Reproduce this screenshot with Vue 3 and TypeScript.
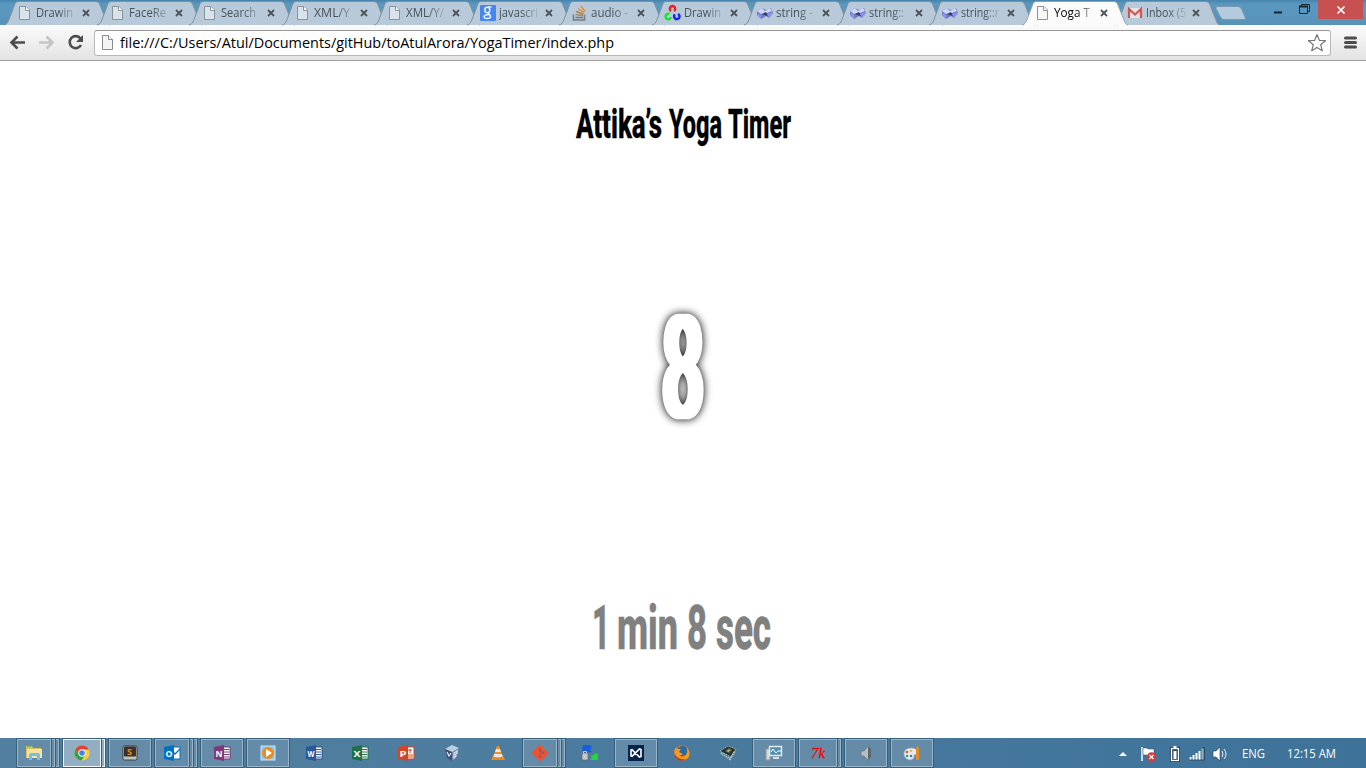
<script setup lang="ts">
interface Tab { title: string; icon: string; active?: boolean; w: number }
interface Task { icon: string; open?: boolean; stack?: number; focus?: boolean }

const tabs: Tab[] = [
  { title: 'Drawin', icon: 'page', w: 37 },
  { title: 'FaceRe', icon: 'page', w: 37 },
  { title: 'Search', icon: 'page', w: 35 },
  { title: 'XML/Y', icon: 'page', w: 36 },
  { title: 'XML/Y/', icon: 'page', w: 38 },
  { title: 'javascri', icon: 'google', w: 39 },
  { title: 'audio -', icon: 'stack', w: 37 },
  { title: 'Drawin', icon: 'opencv', w: 37 },
  { title: 'string -', icon: 'cpp', w: 37 },
  { title: 'string::', icon: 'cpp', w: 35 },
  { title: 'string::r', icon: 'cpp', w: 38 },
  { title: 'Yoga T', icon: 'page', active: true, w: 36 },
  { title: 'Inbox (5', icon: 'gmail', w: 40 },
]

const tasks: Task[] = [
  { icon: 'explorer', open: true, stack: 2 },
  { icon: 'chrome', open: true, stack: 1, focus: true },
  { icon: 'sublime', open: true },
  { icon: 'outlook', open: true, stack: 2 },
  { icon: 'onenote', open: true },
  { icon: 'wmp', open: true },
  { icon: 'word' },
  { icon: 'excel' },
  { icon: 'ppt' },
  { icon: 'vbox' },
  { icon: 'vlc' },
  { icon: 'git', open: true, stack: 2 },
  { icon: 'sync' },
  { icon: 'vs', open: true },
  { icon: 'firefox' },
  { icon: 'chip' },
  { icon: 'monitor', open: true },
  { icon: 'tk', open: true, stack: 1 },
  { icon: 'speaker', open: true },
  { icon: 'paint', open: true },
]

const office: Record<string, { c: string; l: string }> = {
  outlook: { c: '#0072c6', l: 'O' },
  onenote: { c: '#80397b', l: 'N' },
  word: { c: '#2a569a', l: 'W' },
  excel: { c: '#1f7246', l: 'X' },
  ppt: { c: '#d24625', l: 'P' },
}
</script>

<template>
  <div class="screen">
    <header class="tabstrip">
      <div class="tabs">
        <div v-for="(t, i) in tabs" :key="i" class="tab" :class="{ active: t.active }">
          <svg class="shape" width="106" height="26" viewBox="0 0 106 26">
            <path
              d="M0 25C3 24.500 4 22 5 19.500L10.500 5C11.500 2 12.500 1.500 15 1.500H91C94 1.500 95 2.500 96 5L102 20C103 23 104 24.500 106 25"
              :fill="t.active ? '#fbfbfb' : '#b8cad9'" :stroke="t.active ? '#8ba3b4' : '#81919e'" />
          </svg>
          <svg class="fav" width="16" height="16" viewBox="0 0 16 16">
            <g v-if="t.icon === 'page'">
              <path d="M2.500 1.500H9L12.500 5V14.500H2.500Z" :fill="t.active ? '#f8f8f8' : '#d9e3eb'" stroke="#8b9298" />
              <path d="M8.500 1.500V5.500H12.500" fill="#fff" stroke="#8b9298" />
            </g>
            <g v-else-if="t.icon === 'google'">
              <rect width="16" height="16" rx="1" fill="#4787ed" />
              <g fill="none" stroke="#e8f1ff" stroke-width="1.500"><ellipse cx="7.300" cy="5" rx="2.500" ry="2.700" /><path d="M8 2H11.500M8 7.500C8 9 10.500 9.200 10.500 11.500C10.500 14 4 14.200 4 11.800C4 9.800 7 9.500 9 9.700" /></g>
            </g>
            <g v-else-if="t.icon === 'stack'" fill="none">
              <path d="M1.500 9.500V15H12.500V9.500" stroke="#777c80" stroke-width="1.600" />
              <path d="M3.500 12.500H11" stroke="#777c80" stroke-width="1.600" />
              <path d="M3.500 9.500L11 10.500M4 6.500L11.500 9" stroke="#a58658" stroke-width="1.500" />
              <path d="M6 3.500L12 7.700M9 1L13 6.500" stroke="#e0913c" stroke-width="1.500" />
            </g>
            <g v-else-if="t.icon === 'opencv'" fill="none" stroke-width="2.500">
              <path d="M6 6A2.700 2.700 0 1 1 9 6" stroke="#ea2027" />
              <path d="M4.300 9A2.700 2.700 0 1 0 5.900 12.200" stroke="#15e52a" />
              <path d="M13 9A2.700 2.700 0 1 1 9.900 9.500" stroke="#1825e8" />
            </g>
            <g v-else-if="t.icon === 'cpp'">
              <path d="M0 6L5 3L9 5L14 3L16 8L12 13L9 11L4 14L0 10Z" fill="#7479c6" />
              <path d="M0 6L5 3L8 6L13 3L15 6L10 8L8 8L4 9Z" fill="#cdd6f5" />
              <path d="M5 9L9 7L11 11L7 10Z" fill="#343e68" />
              <path d="M1 8L4 10V13L1 11ZM10 9L15 7V10L12 12Z" fill="#8b91ef" />
            </g>
            <g v-else>
              <rect x="1" y="3" width="14" height="10" fill="#e6e4e7" />
              <path d="M2 13V4L8 9.500L14 4V13" fill="none" stroke="#d5544f" stroke-width="2.200" />
            </g>
          </svg>
          <svg class="ttl" width="44" height="18"><text x="0" y="13" :textLength="t.w" lengthAdjust="spacingAndGlyphs">{{ t.title }}</text></svg>
          <svg class="close" width="8" height="8" viewBox="0 0 8 8"><path d="M1 1L7 7M7 1L1 7" /></svg>
        </div>
      </div>
      <svg class="newtab" width="32" height="16" viewBox="0 0 32 16"><path d="M2 .5H23Q25.500 .5 26.500 3L30.500 12Q31 13.500 29 13.500H9Q6.500 13.500 5.500 11L1 2.500Q.5 .5 2 .5Z" fill="#b4cbdc" stroke="#7899af" /></svg>
      <div class="winctl">
        <svg width="44" height="20" viewBox="0 0 44 20"><path d="M0 12.500H8" stroke="#15222c" stroke-width="2" /><path d="M25.500 6.500H33.500V13.500H25.500ZM27.500 6V4.500H35.500V11.500H34" fill="none" stroke="#1b2730" /><path d="M25 6.500H34" stroke="#1b2730" stroke-width="2" /></svg>
        <div class="x"><svg width="10" height="10" viewBox="0 0 10 10"><path d="M1.500 1.500L8.500 8.500M8.500 1.500L1.500 8.500" stroke="#fff" stroke-width="1.700" /></svg></div>
      </div>
    </header>

    <div class="toolbar">
      <svg class="nav" width="94" height="34" viewBox="0 0 94 34" fill="none" stroke-width="2.600">
        <path d="M25 16.500H12M17.500 10.500L11.500 16.500L17.500 22.500" stroke="#4c4c4c" />
        <path d="M39 16.500H52M46.500 10.500L52.500 16.500L46.500 22.500" stroke="#c5c5c5" />
        <path d="M80.500 12.500A6 6 0 1 0 81 19" stroke="#4c4c4c" />
        <path d="M83 9V16H76Z" fill="#4c4c4c" stroke="none" />
      </svg>
      <div class="omni">
        <svg width="16" height="18" viewBox="0 0 16 18"><path d="M2.500 1.500H8.500L12.500 5.500V15.500H2.500Z" fill="#f4f4f4" stroke="#8b8b8b" /><path d="M8.500 1.500V5.500H12.500" fill="#fff" stroke="#8b8b8b" /></svg>
        <svg class="url" width="520" height="24"><text x="0" y="17" textLength="494" lengthAdjust="spacingAndGlyphs">file:///C:/Users/Atul/Documents/gitHub/toAtulArora/YogaTimer/index.php</text></svg>
        <svg class="star" width="20" height="20" viewBox="0 0 20 20"><path d="M10 1.500L12.300 7.300L18.500 7.700L13.700 11.700L15.300 17.800L10 14.500L4.700 17.800L6.300 11.700L1.500 7.700L7.700 7.300Z" fill="#fff" stroke="#777" stroke-width="1.200" stroke-linejoin="round" /></svg>
      </div>
      <svg class="menu" width="13" height="14" viewBox="0 0 13 14"><path d="M1.500 2H11.500M1.500 6.500H11.500M1.500 11H11.500" stroke="#4d4d4d" stroke-width="3" stroke-linecap="round" /></svg>
    </div>

    <main class="page">
      <svg class="heading" width="240" height="56" viewBox="563 95 240 56">
        <text x="576" y="138" textLength="86" lengthAdjust="spacingAndGlyphs">Attika’s</text>
        <text x="669" y="138" textLength="53" lengthAdjust="spacingAndGlyphs">Yoga</text>
        <text x="728" y="138" textLength="63" lengthAdjust="spacingAndGlyphs">Timer</text>
      </svg>
      <svg class="count" width="110" height="160" viewBox="628 287 110 160">
        <filter id="widen" x="-50%" y="-10%" width="200%" height="120%"><feMorphology operator="dilate" radius="4 0.01" /></filter>
        <g filter="url(#widen)"><text x="663.100" y="417" textLength="39.800" lengthAdjust="spacingAndGlyphs">8</text></g>
      </svg>
      <svg class="elapsed" width="200" height="70" viewBox="583 592 200 70">
        <text x="592" y="649" textLength="18" lengthAdjust="spacingAndGlyphs">1</text>
        <text x="617" y="649" textLength="61" lengthAdjust="spacingAndGlyphs">min</text>
        <text x="687" y="649" textLength="20" lengthAdjust="spacingAndGlyphs">8</text>
        <text x="716" y="649" textLength="55" lengthAdjust="spacingAndGlyphs">sec</text>
      </svg>
    </main>

    <footer class="taskbar">
      <div class="tasks">
        <div v-for="(k, i) in tasks" :key="i" class="slot">
          <div class="btn" :class="{ open: k.open, focus: k.focus }">
            <svg width="18" height="18" viewBox="0 0 18 18">
              <g v-if="k.icon === 'explorer'">
                <path d="M1 2H7L8 4H16V14H1Z" fill="#d9bd62" /><path d="M2 5H17V14H2Z" fill="#f6e49b" />
                <path d="M2 2H6" stroke="#54b948" stroke-width="1.500" />
                <path d="M4 16V11Q4 9 6 9H13Q15 9 15 11V16H12V12H7V16Z" fill="#72bee8" />
              </g>
              <g v-else-if="k.icon === 'chrome'">
                <circle cx="9" cy="9" r="7.500" fill="#f8cf35" />
                <path d="M2.500 5.300A7.500 7.500 0 0 1 15.700 5.600L9 5.600L6 10Z" fill="#db4437" />
                <path d="M2.500 5.300A7.500 7.500 0 0 0 8.500 16.500L12 11L6.500 11Z" fill="#31a14f" />
                <circle cx="9" cy="9" r="3.700" fill="#fff" /><circle cx="9" cy="9" r="2.800" fill="#4285e4" />
              </g>
              <g v-else-if="k.icon === 'sublime'">
                <rect x="2" y="2" width="14" height="14" rx="1.500" fill="#c2c2b8" stroke="#2d2a28" stroke-width=".8" /><rect x="3" y="2.500" width="12" height="10" rx="1" fill="#39322d" />
                <text x="6" y="11" font-size="9" font-weight="700" fill="#e8902b">S</text>
              </g>
              <g v-else-if="office[k.icon]">
                <rect x="8" y="3" width="9" height="12" fill="#fff" :stroke="office[k.icon].c" />
                <path v-if="k.icon === 'outlook'" d="M8 6L12 10L17 5" fill="none" stroke="#0072c6" stroke-width="1.300" />
                <path v-else-if="k.icon === 'ppt'" d="M11 6H15M11 11H16M11 13H16M13 5V9" stroke="#d24625" />
                <path v-else d="M10 5.500H16M10 8H16M10 10.500H16M10 13H16" :stroke="office[k.icon].c" />
                <path d="M1 3L11 1V17L1 15Z" :fill="office[k.icon].c" />
                <text x="2.500" y="12.500" font-size="9.500" font-weight="700" fill="#fff" textLength="7" lengthAdjust="spacingAndGlyphs">{{ office[k.icon].l }}</text>
              </g>
              <g v-else-if="k.icon === 'wmp'">
                <rect x="2" y="2" width="14" height="14" fill="#8bc9ee" stroke="#c6e8fb" /><circle cx="9" cy="9" r="6" fill="#f18b17" /><path d="M7 5L13 9L7 13Z" fill="#fff" />
              </g>
              <g v-else-if="k.icon === 'vbox'">
                <path d="M9 1L16 4L14 13L9 17L4 14L2 5Z" fill="#7187a8" /><path d="M2 5L9 8L16 4L9 1Z" fill="#bdcde0" /><path d="M2 5L9 8V17L4 14Z" fill="#3d5177" />
                <path d="M4 8L6 12L8 9M11 9V14L13 12Q12 10 14 9L14 7Z" fill="none" stroke="#e0e8f2" stroke-width="1.200" />
              </g>
              <g v-else-if="k.icon === 'vlc'">
                <path d="M4 11H14L16 16H2Z" fill="#ef8616" /><path d="M8 2H10L14 13Q9 16 4 13Z" fill="#f39021" /><path d="M7 5H11L12 8H6ZM5.200 10H12.800L13.500 12.500Q9 14 4.500 12.500Z" fill="#e8e8e8" />
              </g>
              <g v-else-if="k.icon === 'git'">
                <path d="M9 .5L17.500 9L9 17.500L.5 9Z" fill="#f05133" /><path d="M7 3.500L9 5.500V12.500M9 6L11.500 8.500" fill="none" stroke="#a05348" stroke-width=".8" /><circle cx="9" cy="6" r="1" fill="#77565a" /><circle cx="11.700" cy="8.700" r="1" fill="#77565a" /><circle cx="9" cy="12.500" r="1" fill="#77565a" />
              </g>
              <g v-else-if="k.icon === 'sync'">
                <path d="M2 1H9L11 3L9 6L11 8L4 9L1 6Z" fill="#175fe2" /><path d="M8 10L10 12L15 9L17 10V16H9L11 14Z" fill="#22d43e" />
                <rect x="1" y="9" width="6" height="7" fill="#c6c9c8" stroke="#666" stroke-width=".7" /><path d="M2.500 9V7.500H5.500V9M3 12H5" fill="none" stroke="#ccc" />
              </g>
              <g v-else-if="k.icon === 'vs'">
                <rect x="1" y="1" width="16" height="16" fill="#07224d" /><path d="M4 6V12L5 12.300L12.500 5L14 5.500V12.500L12.500 13L5 5.700Z" fill="none" stroke="#fff" stroke-width="1.600" />
              </g>
              <g v-else-if="k.icon === 'firefox'">
                <circle cx="9" cy="9" r="7.700" fill="#e66f1b" /><circle cx="9.500" cy="7" r="5" fill="#286b9d" />
                <path d="M2 4L5 5L8 5L6 8L10 10Q8 12 6 11Q9 15 13 11Q15 8 14 4Q18 9 15 14Q10 18 4 14Q0 10 2 4Z" fill="#f39a24" /><path d="M1.300 9Q4 16 13 15.500Q8 18 4 15Q1.500 13 1.300 9Z" fill="#b83c1c" />
              </g>
              <g v-else-if="k.icon === 'chip'">
                <path d="M1 7L9 2L17 5L12 13Z" fill="#233636" stroke="#ced2b5" stroke-dasharray="1 1" /><path d="M6 7L10 4L13 6L10 9Z" fill="#547770" /><path d="M8 7L10 5.500L11 6.500L9 8Z" fill="#eeb544" /><path d="M2 9L11 15L16 7" stroke="#d1d2c0" stroke-width="2" stroke-dasharray="1 1" fill="none" />
              </g>
              <g v-else-if="k.icon === 'monitor'">
                <rect x="1" y="5" width="4" height="11" fill="#d5d8d8" stroke="#8c9b9f" /><rect x="4.500" y="2.500" width="12" height="9" fill="#4d8fb4" stroke="#e6e8e5" stroke-width="1.500" /><path d="M6 8L8 5L11 9L13 7H16" fill="none" stroke="#fff" /><path d="M8 14H14" stroke="#ddd" stroke-width="2" />
              </g>
              <text v-else-if="k.icon === 'tk'" x="2" y="14" class="tk" textLength="14" lengthAdjust="spacingAndGlyphs">7k</text>
              <g v-else-if="k.icon === 'speaker'">
                <path d="M4 7H7L12 1V17L7 12H4Z" fill="#b8bdbf" stroke="#667680" stroke-width=".7" /><path d="M11 2V16L14 13V5Z" fill="#5a6970" />
              </g>
              <g v-else>
                <path d="M1 10Q1 4 8 4Q15 4 14 9Q13 11 11 11Q12 15 7 16Q1 15 1 10Z" fill="#e7eaf0" stroke="#9ba9b9" stroke-width=".6" /><circle cx="4" cy="8" r="1.300" fill="#df5044" /><circle cx="8" cy="7" r="1.300" fill="#efba35" /><circle cx="4" cy="12" r="1.300" fill="#3fa34d" /><circle cx="8" cy="12" r="1.300" fill="#3c7dd1" /><path d="M14 1L16 4V16H13V5Z" fill="#e58a25" />
              </g>
            </svg>
          </div>
          <div v-for="n in k.stack ?? 0" :key="n" class="edge" :class="{ focus: k.focus }"></div>
        </div>
      </div>
      <div class="tray">
        <svg width="120" height="20" viewBox="0 0 120 20">
          <path d="M5 12L9 8L13 12Z" fill="#fff" />
          <path d="M28 3V17" stroke="#fff" stroke-width="1.500" /><path d="M29 4H33L34 5H40V12H34L33 11H29Z" fill="#fff" stroke="#284b63" stroke-width=".5" />
          <circle cx="37.500" cy="13" r="4.700" fill="#db3934" /><path d="M35.500 11L39.500 15M39.500 11L35.500 15" stroke="#fff" stroke-width="1.300" />
          <rect x="57.500" y="4.500" width="7" height="12" fill="none" stroke="#203b50" stroke-width="3" /><rect x="57.500" y="4.500" width="7" height="12" fill="#284c65" stroke="#fff" stroke-width="1.300" /><rect x="59.500" y="7" width="3" height="8" fill="#fff" /><path d="M59.500 3H62.500" stroke="#fff" stroke-width="2" />
          <path d="M75.500 13V16H90.500V3.500H88.500" fill="none" stroke="#264d69" /><path d="M76.500 13V15.500M79.500 11V15.500M82.500 9V15.500M85.500 7V15.500" stroke="#fff" stroke-width="2" /><path d="M88.500 4.500V15.500" stroke="#92aebe" stroke-width="2" />
          <path d="M99 7H102L106 3V17L102 13H99Z" fill="#fff" stroke="#234057" stroke-width=".6" /><path d="M108 7Q110 10 108 13M110 5Q114 10 110 15" fill="none" stroke="#e8f0f5" />
        </svg>
        <svg class="traytxt" width="110" height="20"><text x="4" y="14" textLength="23" lengthAdjust="spacingAndGlyphs">ENG</text><text x="49" y="14" textLength="49" lengthAdjust="spacingAndGlyphs">12:15 AM</text></svg>
      </div>
    </footer>
  </div>
</template>

<style>
html, body { margin: 0; overflow: hidden; }
</style>

<style scoped>
.screen { width: 1366px; height: 768px; display: flex; flex-direction: column; background: #fff; font-family: "Open Sans", "Noto Sans", sans-serif; overflow: hidden; }
svg { display: block; flex: none; overflow: visible; }
.tabstrip { height: 25px; flex: none; display: flex; background: linear-gradient(#4784ab, #5b98c0 4px, #5792b9); }
.tabs { display: flex; padding-left: 5px; flex: none; }
.tab { position: relative; width: 92.5px; height: 25px; flex: none; display: flex; align-items: center; box-sizing: border-box; padding-left: 12px; }
.tab.active { z-index: 2; }
.shape { position: absolute; left: -1px; top: 0; }
.fav, .ttl, .close { position: relative; top: .5px; }
.tab .fav { margin-right: 3px; }
.ttl { font-size: 12px; fill: #46515b; mask-image: linear-gradient(90deg, #000 22px, transparent 43px); }
.active .ttl { fill: #000; }
.close { margin-left: 2px; }
.close path { stroke: #4b545b; stroke-width: 1.8; }
.newtab { margin: 6px 0 0 7px; }
.winctl { display: flex; margin-left: auto; padding-right: 3px; }
.x { width: 45px; height: 19px; background: #c75050; display: flex; align-items: center; justify-content: center; }
.toolbar { height: 36px; flex: none; box-sizing: border-box; display: flex; align-items: center; border-bottom: 1px solid #a0a0a0; background: linear-gradient(#fbfbfb, #e3e3e3); }
.omni { width: 1237px; height: 26px; box-sizing: border-box; border: 1px solid #b8b8b8; border-top-color: #979797; border-radius: 3px; background: #fff; display: flex; align-items: center; padding: 0 3px 0 5px; }
.url { margin-left: 4px; font-size: 15px; fill: #000; }
.star { margin-left: auto; }
.menu { margin-left: 13px; }
.page { flex: 1; display: flex; flex-direction: column; align-items: center; padding-top: 34px; }
.page text { font-family: Roboto, "Liberation Sans", sans-serif; font-weight: 800; }
.heading text { font-size: 40px; fill: #000; stroke: #000; stroke-width: .3px; }
.count { margin-top: 136px; filter: drop-shadow(0 0 4px rgba(0,0,0,.9)) drop-shadow(0 0 2px rgba(0,0,0,.15)); }
.count text { font-size: 141px; font-weight: 400; fill: #fff; stroke: #fff; stroke-width: 2.7px; stroke-linejoin: round; }
.elapsed { margin-top: 145px; }
.elapsed text { font-size: 61px; fill: #808080; stroke: #808080; stroke-width: .5px; }
.taskbar { height: 30px; flex: none; display: flex; justify-content: space-between; background: linear-gradient(90deg, #527f9f, #4a7b9e 50%, #3e7299); }
.tasks { display: flex; padding-left: 17px; }
.slot { width: 46px; height: 30px; box-sizing: border-box; padding: 1px 4px 1px 0; display: flex; gap: 1px; }
.btn { flex: 1; display: flex; align-items: center; justify-content: center; box-sizing: border-box; border: 1px solid transparent; }
.open, .edge { border: 1px solid #9ab5c7; background: #648ba8; outline: 1px solid #385f7a; outline-offset: 0; }
.open.focus, .edge.focus { border-color: #f0f5f8; background: #92aec2; }
.edge { width: 3px; box-sizing: border-box; border-left: 0; }
.tk { font: italic 400 15px "Liberation Serif", serif; fill: #f00; stroke: #f00; stroke-width: .3px; }
.tray { display: flex; align-items: center; width: 252px; padding-top: 2px; }
.traytxt { font-size: 12px; fill: #fff; margin-left: 4px; }
</style>
